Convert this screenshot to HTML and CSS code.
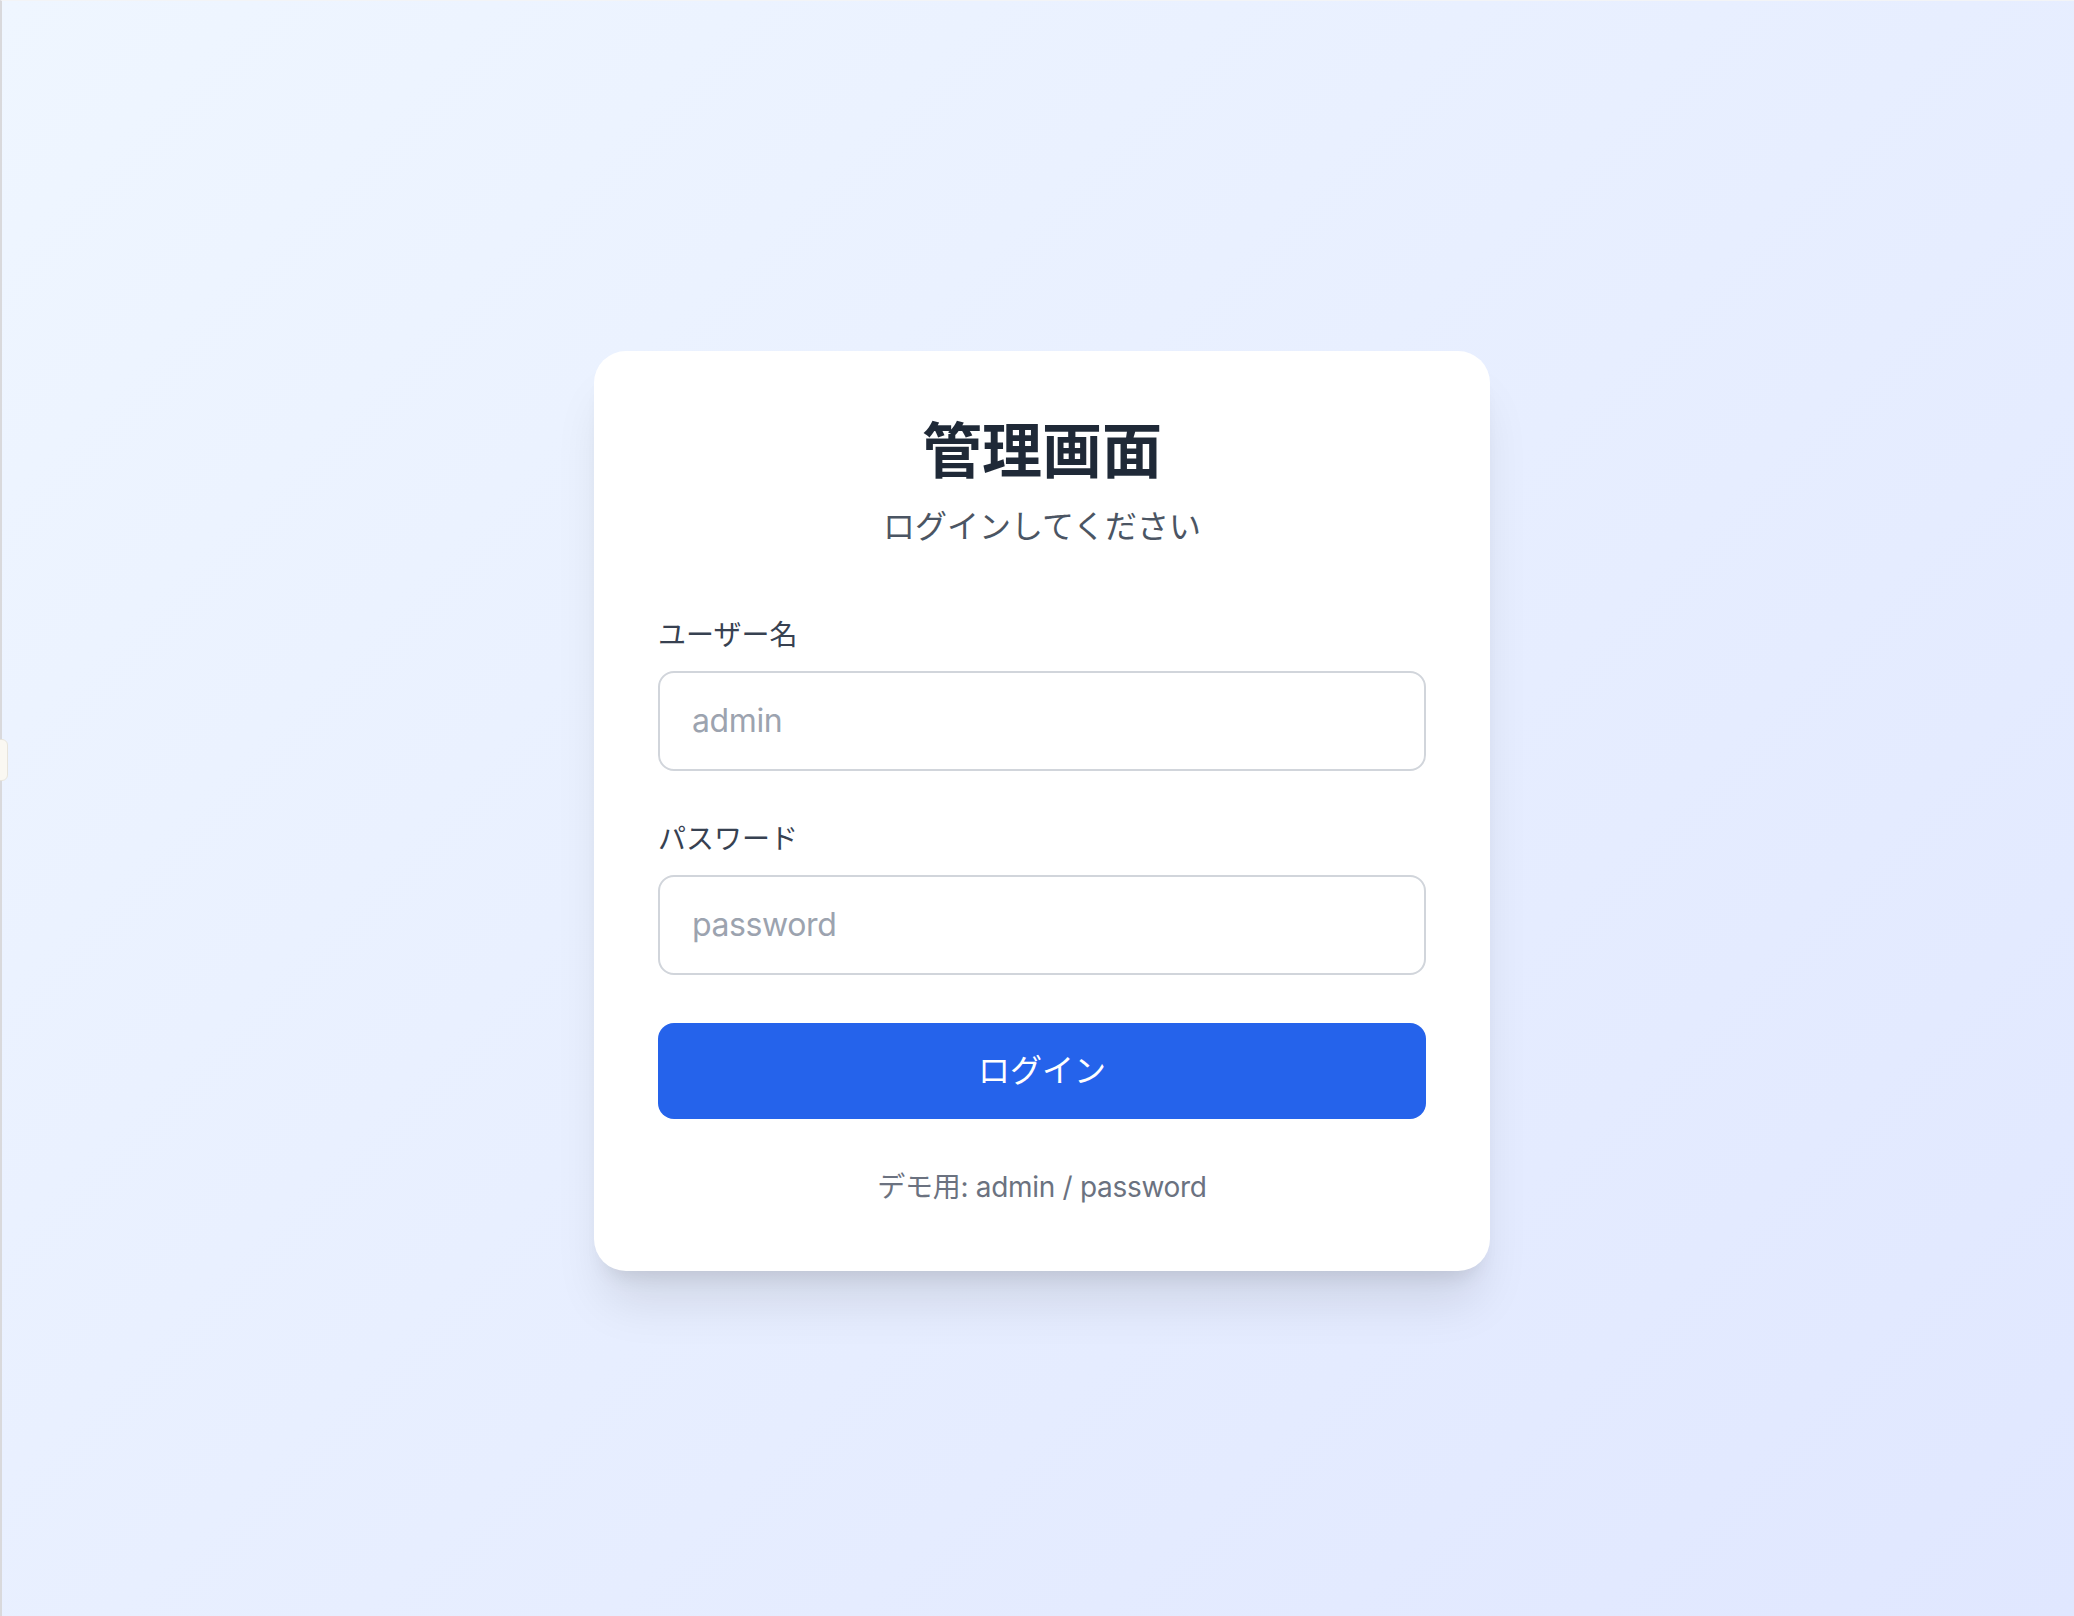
FILE: index.html
```html
<!DOCTYPE html>
<html lang="ja">
<head>
  <meta charset="UTF-8">
  <title>管理画面 - ログイン</title>
  <link rel="stylesheet" href="styles.css">
</head>
<body>

  <div class="side-tab"></div>

  <main class="page">
    <div class="card">
      <div class="card-header">
        <h1>管理画面</h1>
        <p class="subtitle">ログインしてください</p>
      </div>

      <form class="login-form" onsubmit="return false;">
        <div class="field">
          <label for="username">ユーザー名</label>
          <input type="text" id="username" placeholder="admin">
        </div>

        <div class="field">
          <label for="password">パスワード</label>
          <input type="password" id="password" placeholder="password">
        </div>

        <button type="submit" class="btn-login">ログイン</button>
      </form>

      <p class="demo-note">デモ用: admin / password</p>
    </div>
  </main>

</body>
</html>
```

FILE: styles.css
```css
html, body {
  height: 100%;
}

body {
  margin: 0;
  font-family: Inter, "Noto Sans CJK JP", sans-serif;
  background: linear-gradient(135deg, #eff6ff 0%, #e0e7ff 100%);
  border-left: 2px solid #d9d9dc;
  border-top: 1px solid #f3f4f6;
  box-sizing: border-box;
}

/* little tab stuck to the left edge */
.side-tab {
  position: fixed;
  left: -6px;
  top: 739px;
  width: 12px;
  height: 40px;
  background: #faf8f2;
  border: 1px solid #e7e4dc;
  border-radius: 6px;
}

.page {
  min-height: 100%;
  display: flex;
  align-items: center;
  justify-content: center;
  padding: 4px 0 0 8px;
  box-sizing: border-box;
}

.card {
  width: 896px;
  background: #fff;
  border-radius: 32px;
  padding: 64px;
  box-sizing: border-box;
  box-shadow: 0 40px 50px -10px rgba(0,0,0,0.1), 0 16px 20px -12px rgba(0,0,0,0.1);
}

.card-header {
  text-align: center;
  margin-bottom: 64px;
}

h1 {
  margin: 0;
  font-size: 60px;
  line-height: 72px;
  font-weight: 700;
  color: #1f2937;
}

.subtitle {
  margin: 16px 0 0;
  font-size: 32px;
  line-height: 48px;
  color: #4b5563;
}

.login-form {
  display: flex;
  flex-direction: column;
  gap: 48px;
}

.field label {
  display: block;
  font-size: 28px;
  line-height: 40px;
  color: #374151;
  margin-bottom: 16px;
}

.field input {
  display: block;
  width: 100%;
  box-sizing: border-box;
  padding: 24px 32px;
  font-family: inherit;
  font-size: 32px;
  line-height: 48px;
  letter-spacing: -0.4px;
  color: #111827;
  border: 2px solid #d1d5db;
  border-radius: 16px;
  outline: none;
  background: #fff;
}

.field input::placeholder {
  color: #9ca3af;
}

.btn-login {
  width: 100%;
  padding: 24px 32px;
  font-family: inherit;
  font-size: 32px;
  line-height: 48px;
  color: #fff;
  background-color: #2563eb;
  border: none;
  border-radius: 16px;
  cursor: pointer;
}

.demo-note {
  margin: 48px 0 0;
  text-align: center;
  font-size: 28px;
  line-height: 40px;
  letter-spacing: -0.3px;
  color: #6b7280;
}
```
